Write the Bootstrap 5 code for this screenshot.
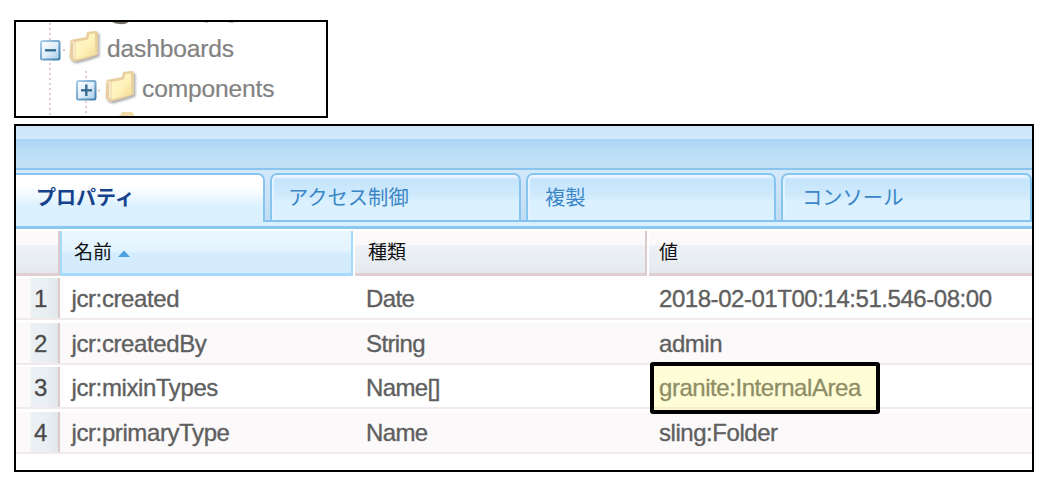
<!DOCTYPE html>
<html lang="ja">
<head>
<meta charset="utf-8">
<title>プロパティ</title>
<link href="https://cdn.jsdelivr.net/npm/bootstrap@5.3.0/dist/css/bootstrap.min.css" rel="stylesheet">
<style>
body{background:#fff;font-family:"Liberation Sans",Arial,"Noto Sans CJK JP",sans-serif;padding:20px 22px 0 14px}
.tree-box{width:314px;height:98px;border:2px solid #000;margin-bottom:6px;color:#828282;font-size:24.6px;letter-spacing:-.16px;-webkit-text-stroke:.2px #828282}
.tree-art{left:0;top:0}
.tree-label{line-height:28px;white-space:nowrap}
.label-a{padding:13px 0 0 91px}
.label-b{padding:12px 0 0 126px}
.panel{width:1020px;height:348px;border:2px solid #000}
.bar-top{height:13px;background:linear-gradient(#cce6f9,#d2e9fa)}
.bar-main{height:31px;background:linear-gradient(#a9d5f6,#badef6 40%,#c4e2f5);border-bottom:2px solid #8ac4ef}
.tabs-row{height:52px;padding-top:3px;gap:5px;background:linear-gradient(#d3e8fb,#c3dcf2 50px,#80c3f0 50px)}
.tab-item{height:47px;width:251px;border:2px solid #86c5f0;border-bottom:0;border-radius:7px 7px 0 0;background:linear-gradient(#eaf5ff 0 2px,#c4e4fb 4px,#d0eafc 45%,#dbf1ff 60%);box-shadow:inset 2px 0 #e3f3ff;color:#3a86c6;font:20.3px/42px "Noto Sans CJK JP",sans-serif;white-space:nowrap}
.tab-active{width:249px;height:49px;border-left:0;border-radius:0 7px 0 0;background:linear-gradient(#fff,#fff 25%,#dcf1ff 65%);box-shadow:none;color:#15428b;font-weight:700;font-size:20px;line-height:44px;padding-left:20px}
.tab-mid{width:250px}
.tab-strip{height:7px;background:#daf0ff;border-bottom:3px solid #89c9f1;margin-bottom:2px}
.head-row{height:45px;background:#fff;font:19px/40px "Noto Sans CJK JP",sans-serif;color:#111;margin-bottom:2px}
.head-cell{height:45px;border-bottom:3px solid #dfcfd1;background:linear-gradient(#fcf9fa 0 32%,#eef1f5 34%,#e8edf2 75%,#e5e8ef)}
.c-num{width:44px;border-right:2px solid #dcc9ca}
.c-name{width:293px}
.h-name{background:linear-gradient(#eaf7ff,#e3f4ff 45%,#d4ecfd 55%,#d4ecfd);border-bottom-color:#a5dafd;border-left:2px solid #a5dafd;border-right:2px solid #a5dafd;padding-left:12px}
.sort-arrow{margin:19px 0 0 6px}
.h-type{width:292px;margin-left:2px;border-right:2px solid #dcc9ca;padding-left:13px}
.h-value{margin-left:2px;padding-left:10px}
.data-row{height:42px;margin-bottom:2.65px;border-bottom:2px solid #f1eaec;color:#5f5f5f;font-size:24px;line-height:42px;letter-spacing:-.4px;white-space:nowrap;-webkit-text-stroke:.35px #5f5f5f}
.data-row.alt{background:#fbf9fa}
.n-cell{height:40px;background:linear-gradient(90deg,#fcf9fa 0 14px,#ebf0f5 15px,#e9eff3 30px,#e5eaef 36px,#e3e7ec);padding-left:18px;color:#454545}
.d-name{width:290px;padding-left:11.5px}
.d-type{width:293px;padding-left:16px;letter-spacing:-.6px}
.d-value{padding-left:16px;letter-spacing:-.45px}
.mark-box{width:230px;height:52px;left:7px;top:-5.5px;border:4px solid #000;border-radius:3px;background:rgba(255,250,120,.3)}
</style>
<script src="https://cdn.jsdelivr.net/npm/bootstrap@5.3.0/dist/js/bootstrap.bundle.min.js"></script>
</head>
<body>
<div class="tree-box position-relative overflow-hidden">
<svg class="tree-art position-absolute" width="310" height="94" viewBox="16 22 310 94">
<defs>
<linearGradient id="fold" x1="0" y1="0" x2="1" y2="1"><stop offset="0" stop-color="#fff8cd"/><stop offset=".5" stop-color="#fff3bc"/><stop offset="1" stop-color="#f3da92"/></linearGradient>
<linearGradient id="btn" x1="0" y1="0" x2="1" y2="1"><stop offset="0" stop-color="#fff"/><stop offset=".5" stop-color="#e1effa"/><stop offset="1" stop-color="#9fc8e8"/></linearGradient>
<linearGradient id="edge" x1="0" y1="0" x2="1" y2="1"><stop offset="0" stop-color="#a9cfea"/><stop offset="1" stop-color="#3f7dab"/></linearGradient>
<filter id="soft" x="-20%" y="-20%" width="150%" height="150%"><feDropShadow dx="1.5" dy="2" stdDeviation="1.2" flood-color="#555" flood-opacity=".5"/></filter>
<g id="folder" filter="url(#soft)">
<path d="M1.500 9.500 L17 6.500 L18 1.500 L26 .6 Q29 .6 29 3 L29 24 L19 27.500 L6 31 Q.5 29 .5 26 Z" fill="#e9cf9f"/>
<path d="M6.500 11.500 L19 9 L20.500 3.500 L26 3 L26.500 24 L6.500 29 Z" fill="url(#fold)"/>
<path d="M2.500 11 L5 12.500 L5 28" fill="none" stroke="#f6e8cb" stroke-width="2"/>
</g>
<g id="toggle"><rect x="1" y="1" width="18.500" height="18.500" rx="1.500" fill="url(#btn)" stroke="url(#edge)" stroke-width="2"/><path d="M5 10.300h11" stroke="#366c91" stroke-width="2.400"/></g>
</defs>
<g stroke="#e2c5c9" stroke-width="1.800" stroke-dasharray="2 3"><path d="M50 23v93M86 71v45M63 50h4M98 90.500h4"/></g>
<path d="M110 20h20q-2 5-10 4-7 0-10-4z" fill="#756e65"/>
<path d="M205 22h3M229 22h5" stroke="#aaa" stroke-width="1.500"/>
<use href="#toggle" x="40" y="40"/>
<use href="#toggle" x="76" y="80"/><path d="M86.300 84.500v11.500" stroke="#366c91" stroke-width="2.400"/>
<use href="#folder" x="69" y="30.500"/>
<use href="#folder" x="105" y="70.500"/>
<path d="M118 116q3-1 4-4h10q2 1 2 4z" fill="#f0dba9"/>
</svg>
<div class="tree-label label-a">dashboards</div>
<div class="tree-label label-b">components</div>
</div>

<div class="panel">
<div class="bar-top"></div>
<div class="bar-main"></div>
<div class="tabs-row d-flex overflow-hidden">
<div class="tab-item tab-active flex-shrink-0">プロパティ</div>
<div class="tab-item flex-shrink-0" style="padding-left:16px">アクセス制御</div>
<div class="tab-item tab-mid flex-shrink-0" style="padding-left:17px">複製</div>
<div class="tab-item flex-shrink-0" style="padding-left:19px">コンソール</div>
</div>
<div class="tab-strip"></div>
<div class="head-row d-flex">
<div class="head-cell c-num"></div>
<div class="head-cell c-name h-name d-flex"><span>名前</span><svg class="sort-arrow" width="12" height="7" viewBox="0 0 12 7"><path d="M0 7L6 .5 12 7z" fill="#4aa3e0"/></svg></div>
<div class="head-cell h-type">種類</div>
<div class="head-cell h-value flex-grow-1">値</div>
</div>
<div class="data-row d-flex"><div class="n-cell c-num">1</div><div class="d-name">jcr:created</div><div class="d-type">Date</div><div class="d-value">2018-02-01T00:14:51.546-08:00</div></div>
<div class="data-row d-flex alt"><div class="n-cell c-num">2</div><div class="d-name">jcr:createdBy</div><div class="d-type">String</div><div class="d-value">admin</div></div>
<div class="data-row d-flex"><div class="n-cell c-num">3</div><div class="d-name">jcr:mixinTypes</div><div class="d-type">Name[]</div><div class="d-value position-relative">granite:InternalArea<div class="mark-box position-absolute"></div></div></div>
<div class="data-row d-flex alt"><div class="n-cell c-num">4</div><div class="d-name">jcr:primaryType</div><div class="d-type">Name</div><div class="d-value">sling:Folder</div></div>
</div>
</body>
</html>
